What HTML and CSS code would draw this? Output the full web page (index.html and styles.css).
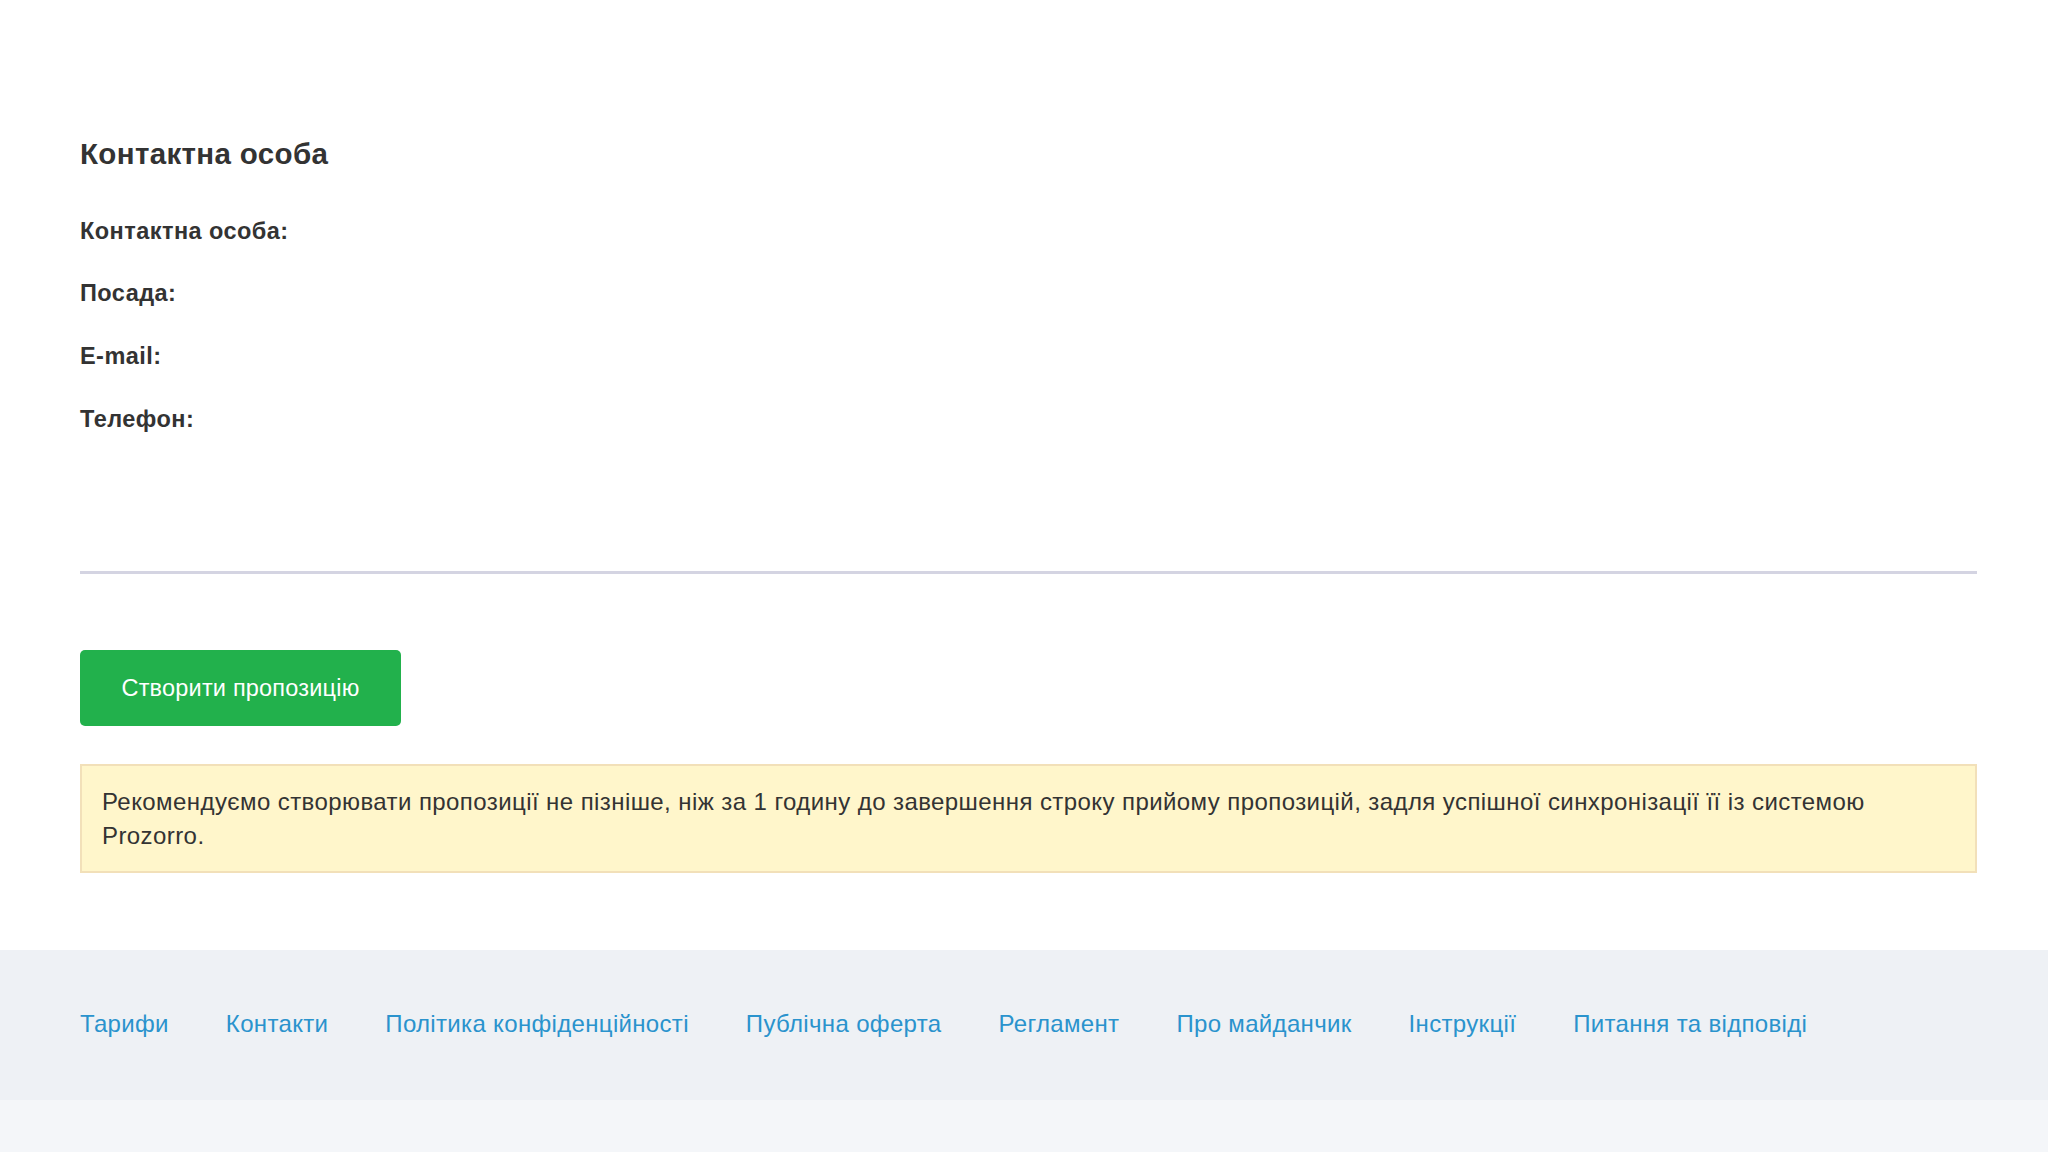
FILE: index.html
```html
<!DOCTYPE html>
<html lang="uk">
<head>
<meta charset="UTF-8">
<title>Контактна особа</title>
<link rel="stylesheet" href="styles.css">
</head>
<body>

<div class="page">
  <h3 class="section-title">Контактна особа</h3>

  <div class="field">Контактна особа:</div>
  <div class="field">Посада:</div>
  <div class="field">E-mail:</div>
  <div class="field">Телефон:</div>

  <hr class="divider">

  <a class="btn-create" href="#">Створити пропозицію</a>

  <div class="notice">
    Рекомендуємо створювати пропозиції не пізніше, ніж за 1 годину до завершення строку прийому пропозицій, задля успішної синхронізації її із системою Prozorro.
  </div>
</div>

<div class="footer">
  <div class="footer-links">
    <a href="#">Тарифи</a>
    <a href="#">Контакти</a>
    <a href="#">Політика конфіденційності</a>
    <a href="#">Публічна оферта</a>
    <a href="#">Регламент</a>
    <a href="#">Про майданчик</a>
    <a href="#">Інструкції</a>
    <a href="#">Питання та відповіді</a>
  </div>
</div>
<div class="footer-bottom"></div>

</body>
</html>
```

FILE: styles.css
```css
body {
  margin: 0;
  background: #fff;
  color: #333;
  font-family: "Liberation Sans", Arial, sans-serif;
  font-size: 24px;
  letter-spacing: 0.42px;
}

.page { padding: 138px 71px 0 80px; }

.section-title {
  margin: 0;
  font-size: 29.5px;
  line-height: 32px;
  font-weight: bold;
  letter-spacing: 0.35px;
  color: #333;
}

.field {
  font-size: 23.5px;
  font-weight: bold;
  letter-spacing: 0.45px;
  line-height: 62.7px;
}
.section-title + .field { margin-top: 29.5px; }

.divider {
  margin: 120.8px 0 0;
  border: 0;
  height: 3px;
  background: #d4d4e2;
}

.btn-create {
  display: inline-block;
  margin-top: 76px;
  width: 321px;
  height: 76px;
  line-height: 76px;
  text-align: center;
  background: #22b14c;
  color: #fff;
  font-size: 23.5px;
  letter-spacing: 0.2px;
  text-decoration: none;
  border-radius: 5px;
}

.notice {
  margin-top: 38px;
  padding: 18.5px 20px;
  line-height: 34px;
  background: #fff6cb;
  border: 2px solid #f2e0b9;
}

.footer {
  margin-top: 77px;
  height: 148px;
  background: #eef1f5;
  display: flex;
  align-items: center;
  padding: 0 80px 2px;
}
.footer-links { display: flex; gap: 57px; letter-spacing: 0.33px; }
.footer-links a { color: #2a93cd; text-decoration: none; }

.footer-bottom { height: 54px; background: #f4f6f9; }
```
